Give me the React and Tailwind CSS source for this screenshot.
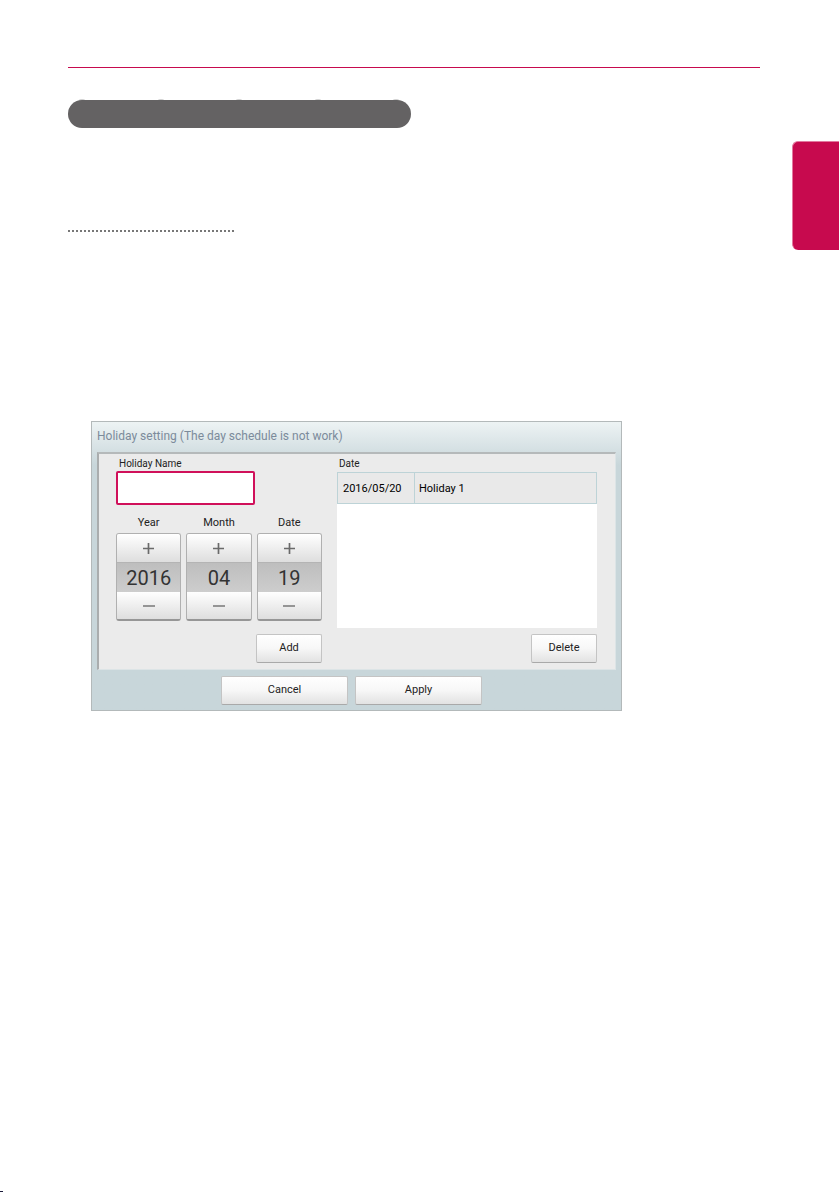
import { useState } from "react";

const buttonStyle =
  "h-[29px] rounded-xs border border-[#c4c4c4] border-b-[#a9a9a9] bg-linear-to-b from-white via-[#f7f7f7] to-[#e2e2e2] text-[11px] text-[#222] cursor-pointer hover:to-[#d4d4d4]";

const pad = (value) => String(value).padStart(2, "0");

function PlusIcon() {
  return (
    <svg width="11" height="11" viewBox="0 0 11 11" aria-hidden="true">
      <path d="M0 5.5H11M5.5 0V11" stroke="#6a6a6a" strokeWidth="1.7" fill="none" />
    </svg>
  );
}

function MinusIcon() {
  return (
    <svg width="12" height="11" viewBox="0 0 12 11" aria-hidden="true">
      <path d="M0 6H12" stroke="#777" strokeWidth="1.7" fill="none" />
    </svg>
  );
}

function HeadingPill() {
  return (
    <svg width="343" height="29" viewBox="0 0 343 29" className="mt-[31px] block" aria-hidden="true">
      <rect y="1" width="343" height="28" rx="14" fill="#646263" />
      {[14, 93, 171, 250, 328].map((x) => (
        <ellipse key={x} cx={x} cy="1" rx="3" ry="1" fill="#646263" opacity="0.3" />
      ))}
    </svg>
  );
}

function Stepper({ label, value, min, max, onChange }) {
  return (
    <div role="group" aria-label={label} className="flex flex-col">
      <span className="h-[18px] text-center text-[11px] leading-4">{label}</span>
      <div className="flex h-[88px] flex-col overflow-hidden rounded-[3px] border border-[#b0b0b0] border-b-2 border-b-[#969696]">
        <button
          type="button"
          aria-label={`Increase ${label}`}
          onClick={() => onChange(Math.min(value + 1, max))}
          className="flex h-7 cursor-pointer items-center justify-center bg-linear-to-b from-white to-[#dedede]"
        >
          <PlusIcon />
        </button>
        <output className="flex flex-1 items-center justify-center border-t border-[#b4b4b4] bg-linear-to-b from-[#bebebe] to-[#cdcdcd] text-xl leading-6 text-[#333]">
          {pad(value)}
        </output>
        <button
          type="button"
          aria-label={`Decrease ${label}`}
          onClick={() => onChange(Math.max(value - 1, min))}
          className="flex h-[27px] cursor-pointer items-center justify-center bg-linear-to-b from-white to-[#dedede]"
        >
          <MinusIcon />
        </button>
      </div>
    </div>
  );
}

function HolidayDialog() {
  const [name, setName] = useState("");
  const [year, setYear] = useState(2016);
  const [month, setMonth] = useState(4);
  const [day, setDay] = useState(19);
  const [holidays, setHolidays] = useState([{ date: "2016/05/20", name: "Holiday 1" }]);

  const addHoliday = () => {
    if (!name) return;
    setHolidays((prev) => [...prev, { date: `${year}/${pad(month)}/${pad(day)}`, name }]);
    setName("");
  };

  return (
    <section className="w-full max-w-[531px] border border-[#b3b9ba] bg-[#c8d6da] bg-linear-to-b from-[#edf3f4] via-[#c8d6da] via-15% to-[#c8d6da] px-[5px] pb-[5px] font-[Roboto,'Liberation_Sans',sans-serif] text-[#222]">
      <h2 className="h-[30px] text-xs leading-7 text-[#7c8b9b]">
        Holiday setting (The day schedule is not work)
      </h2>

      <div className="flex gap-[15px] border-t-2 border-r border-b border-l-2 border-t-[#b5b9ba] border-r-[#dce4e6] border-b-[#dce4e6] border-l-[#aaadae] bg-[#ebebeb] pt-[2px] pr-[18px] pb-[6px] pl-[17px]">
        {/* Editor */}
        <div className="flex w-[206px] flex-col">
          <label htmlFor="holiday-name" className="pl-[3px] text-[10px] leading-[15px]">
            Holiday Name
          </label>
          <input
            id="holiday-name"
            type="text"
            value={name}
            onChange={(e) => setName(e.target.value)}
            className="h-[34px] w-[139px] rounded-xs border-2 border-[#d0105a] bg-white px-2 text-xs outline-none"
          />
          <div className="mt-[10px] grid grid-cols-3 gap-[5px]">
            <Stepper label="Year" value={year} min={2000} max={2099} onChange={setYear} />
            <Stepper label="Month" value={month} min={1} max={12} onChange={setMonth} />
            <Stepper label="Date" value={day} min={1} max={31} onChange={setDay} />
          </div>
          <button type="button" onClick={addHoliday} className={`${buttonStyle} mt-[13px] w-[66px] self-end`}>
            Add
          </button>
        </div>

        {/* List */}
        <div className="flex flex-1 flex-col">
          <span id="holiday-list" className="pl-[2px] text-[10px] leading-[15px]">
            Date
          </span>
          <div className="mt-px mb-[6px] flex-1 bg-white">
            <table
              aria-labelledby="holiday-list"
              className="w-full table-fixed border-collapse text-[11px] text-black"
            >
              <tbody>
                {holidays.map((holiday) => (
                  <tr key={`${holiday.date}-${holiday.name}`} className="h-[31px] bg-[#e9e9e9]">
                    <td className="w-[77px] border border-[#bdd3d7] pt-[2px] pl-[5px]">{holiday.date}</td>
                    <td className="border border-[#bdd3d7] pt-[2px] pl-1">{holiday.name}</td>
                  </tr>
                ))}
              </tbody>
            </table>
          </div>
          <button
            type="button"
            onClick={() => setHolidays((prev) => prev.slice(0, -1))}
            className={`${buttonStyle} w-[66px] self-end`}
          >
            Delete
          </button>
        </div>
      </div>

      <div className="mt-[6px] flex justify-center gap-[7px] pr-[10px]">
        <button type="button" className={`${buttonStyle} w-[127px]`}>
          Cancel
        </button>
        <button type="button" className={`${buttonStyle} w-[127px]`}>
          Apply
        </button>
      </div>
    </section>
  );
}

export default function App() {
  return (
    <div className="flex min-h-screen flex-col bg-white">
      <div className="flex flex-1 gap-8 pr-px pl-[68px]">
        <main className="min-w-0 flex-1 pt-[67px]">
          <div className="h-px bg-[#c70a4e]" />
          <HeadingPill />
          <svg width="168" height="2" className="mt-[102px] block" aria-hidden="true">
            <path d="M0 1H168" stroke="#777" strokeWidth="2" strokeDasharray="2 2" />
          </svg>
          <div className="mt-[189px] pl-[23px]">
            <HolidayDialog />
          </div>
        </main>
        <aside className="mt-[141px] h-[109px] w-[47px] rounded-l-md border-t border-l border-[#e27a9f] bg-[#c70a4e]" />
      </div>
      <footer className="h-px w-[3px] bg-[#1a1a3a]" />
    </div>
  );
}
